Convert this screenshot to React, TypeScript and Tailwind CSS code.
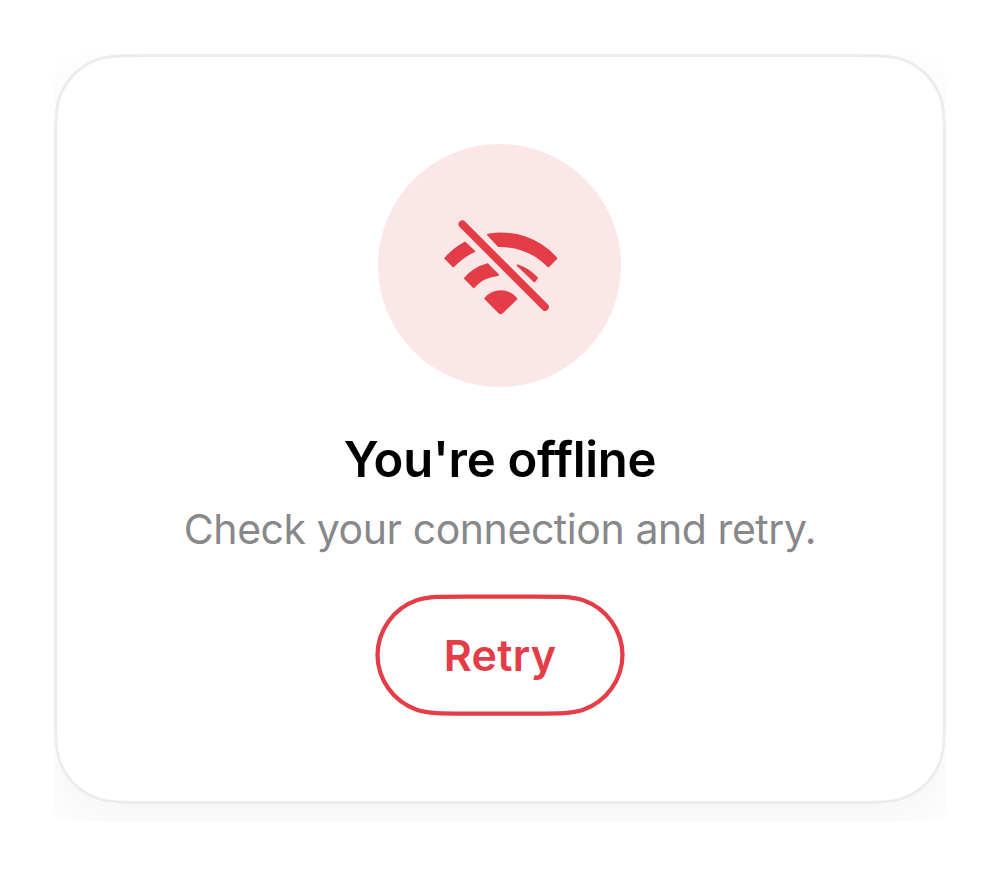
import React from 'react';

// Rounded rectangle with smoothed (continuous) corners
const cardOutline = (w: number, h: number, r: number, o: number): string => {
  const a = 1.5287 * r;
  const b = 1.0885 * r;
  const c = 0.8684 * r;
  const d = 0.6699 * r;
  const e = 0.0655 * r;
  const x = w - o;
  const y = h - o;
  return [
    `M${o + a} ${o}H${x - a}`,
    `C${x - b} ${o} ${x - c} ${o} ${x - d} ${o + e}`,
    `A${r} ${r} 0 0 1 ${x - e} ${o + d}`,
    `C${x} ${o + c} ${x} ${o + b} ${x} ${o + a}`,
    `V${y - a}`,
    `C${x} ${y - b} ${x} ${y - c} ${x - e} ${y - d}`,
    `A${r} ${r} 0 0 1 ${x - d} ${y - e}`,
    `C${x - c} ${y} ${x - b} ${y} ${x - a} ${y}`,
    `H${o + a}`,
    `C${o + b} ${y} ${o + c} ${y} ${o + d} ${y - e}`,
    `A${r} ${r} 0 0 1 ${o + e} ${y - d}`,
    `C${o} ${y - c} ${o} ${y - b} ${o} ${y - a}`,
    `V${o + a}`,
    `C${o} ${o + b} ${o} ${o + c} ${o + e} ${o + d}`,
    `A${r} ${r} 0 0 1 ${o + d} ${o + e}`,
    `C${o + c} ${o} ${o + b} ${o} ${o + a} ${o}Z`,
  ].join('');
};

// Capsule whose round ends ease into the long sides
const capsuleOutline = (w: number, h: number, o: number): string => {
  const r = h / 2 - o;
  const x = w - o;
  const y = h - o;
  const a = 1.5287 * r;
  const b = 1.0885 * r;
  const c = 0.8684 * r;
  const d = 0.6699 * r;
  const e = 0.0655 * r;
  return [
    `M${o + a} ${o}H${x - a}`,
    `C${x - b} ${o} ${x - c} ${o} ${x - d} ${o + e}`,
    `A${r} ${r} 0 0 1 ${x} ${h / 2}`,
    `A${r} ${r} 0 0 1 ${x - d} ${y - e}`,
    `C${x - c} ${y} ${x - b} ${y} ${x - a} ${y}`,
    `H${o + a}`,
    `C${o + b} ${y} ${o + c} ${y} ${o + d} ${y - e}`,
    `A${r} ${r} 0 0 1 ${o} ${h / 2}`,
    `A${r} ${r} 0 0 1 ${o + d} ${o + e}`,
    `C${o + c} ${o} ${o + b} ${o} ${o + a} ${o}Z`,
  ].join('');
};

const WifiSlashIcon: React.FC = () => (
  <svg width="140" height="120" viewBox="-1 1 420 360" fill="#e43d47" stroke="#e43d47" strokeLinejoin="round" aria-hidden="true">
    <g strokeWidth="6">
      <path d="M104 111L131 137A203 203 0 0 0 69 182L45 158A221 221 0 0 1 104 111Z" />
      <path d="M173 87A221 221 0 0 1 378 158L354 182A203 203 0 0 0 205 121Z" />
      <path d="M172 176L203 208A112 112 0 0 0 130 244L104 218A141 141 0 0 1 172 176Z" />
      <path d="M262 179A141 141 0 0 1 320 217L312 227Z" />
      <path d="M165 279A60 60 0 0 1 258 279L216 320Q211 325 206 320Z" />
    </g>
    <path d="M96 56L344 304" strokeWidth="23" strokeLinecap="round" />
  </svg>
);

const OfflineCard: React.FC = () => (
  <div className="h-[768px] w-[892px] overflow-hidden">
    <div className="relative flex h-[750px] flex-col items-center rounded-[64px] pt-[90px] shadow-[0_16px_52px_4px_rgba(0,0,0,0.045)]">
      <svg className="absolute inset-0" width="892" height="750" fill="#fff" aria-hidden="true">
        <path d={cardOutline(892, 750, 62, 1.5)} stroke="#ececec" strokeWidth="3" />
      </svg>

      <div className="relative right-[0.5px] flex size-[243px] items-center justify-center rounded-full bg-[#fbe7e7]">
        <WifiSlashIcon />
      </div>

      <h1 className="relative mt-[43px] text-[49px] leading-[60px] font-semibold tracking-[-0.25px] text-black">
        You're offline
      </h1>
      <p className="relative mt-[14px] text-[41px] leading-[50px] tracking-[-0.43px] text-[#88888b]">
        Check your connection and retry.
      </p>

      <button className="relative mt-[40px] flex h-[122px] w-[250px] items-center justify-center text-[43px] font-semibold tracking-[0.3px] text-[#e43d47]">
        <svg className="absolute inset-0" width="250" height="122" fill="none" aria-hidden="true">
          <path d={capsuleOutline(250, 122, 2.5)} stroke="#e43d47" strokeWidth="4.25" />
        </svg>
        <span>Retry</span>
      </button>
    </div>
  </div>
);

const App: React.FC = () => {
  return (
    <main className="flex min-h-[876px] justify-center bg-white pt-[54px] font-[Inter,sans-serif]">
      <OfflineCard />
    </main>
  );
};

export default App;
